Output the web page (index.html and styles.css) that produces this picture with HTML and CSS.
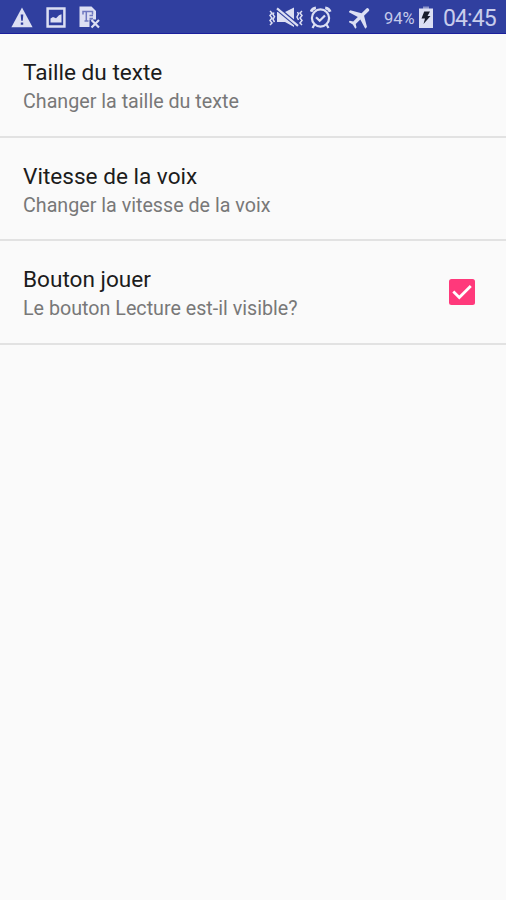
FILE: index.html
```html
<!DOCTYPE html>
<html lang="fr">
<head>
<meta charset="utf-8">
<title>Paramètres</title>
<link rel="stylesheet" href="styles.css">
</head>
<body>
<header class="status">
  <div class="notifications">
    <svg class="icon" width="22" height="22" viewBox="0 0 22 22"><path fill="currentColor" d="M11 .6 21.600 20.300H.4z"/><path fill="#303f9f" d="M9.700 7.500l.5 6.300h1.600l.5-6.300zM9.800 15.500v2.300h2.400v-2.300z"/></svg>
    <svg class="icon" width="20" height="22" viewBox="0 0 20 22"><path fill="none" stroke="currentColor" stroke-width="2.500" d="M1.600 1.400h16.800v18H1.600z"/><path fill="currentColor" d="M4.500 15.500V11.500l2.500-1.500 3 1.200 3-3 2.500-1v8.300z"/></svg>
    <svg class="icon" width="22" height="23" viewBox="0 0 22 23"><path fill="currentColor" d="M.5.5h12L17 5v9l-5 7H.5z"/><path fill="#303f9f" d="M10.500 13.500H22V23H10.500z"/><path fill="none" stroke="#6f79c0" stroke-width="1.500" d="M4 8.500V5.600h9.500v2.900M7.300 6v9M5.500 15h4M10.500 9.500H14M10.500 12.500H14"/><path stroke="currentColor" stroke-width="2.200" d="m12.500 14 7.500 7.500m0-7.500-7.500 7.500"/></svg>
  </div>
  <div class="system">
    <svg class="icon mute" width="34" height="22" viewBox="0 0 34 22"><path fill="currentColor" d="M8 5h8L25 .5v19.500l-9-5H8z"/><path stroke="#303f9f" stroke-width="4.600" d="m7 .5 23 19"/><path stroke="currentColor" stroke-width="2.200" d="m8 1.300 21 17.500"/><path fill="none" stroke="currentColor" stroke-width="1.500" d="m1 4 2 2-2 2.500L3 11l-2 2.500L3 16l-2 2M5 5.500 4 7.500l1.500 2-1.500 3L5.500 15M33 4l-2 2 2 2.500-2 2.500 2 2.500-2 2.500 2 2M28.500 5l1 2-1.500 3 1.500 3"/></svg>
    <svg class="icon alarm" width="22" height="24" viewBox="0 0 22 24"><g fill="none" stroke="currentColor"><circle cx="10.500" cy="12" r="8.600" stroke-width="2.200"/><path stroke-width="2.200" d="m6 11.200 3.700 3.600L15 9.500M4.500 18.500l-2 3.500M16.500 18.500l2 3.500"/><path stroke-width="2.800" d="M1 5.700Q2.200 2.200 5.900 1.800M20.200 5.700Q19 2.200 15.200 1.800"/></g></svg>
    <svg class="icon plane" width="22" height="22" viewBox="0 0 22 22"><path fill="currentColor" transform="translate(11.300 10) rotate(45) scale(1.180) translate(-12 -12)" d="M22 16v-2l-8.500-5V3.500a1.500 1.500 0 0 0-3 0V9L2 14v2l8.500-2.500V19L8 20.500V22l4-1 4 1v-1.500L13.500 19v-5.500z"/></svg>
    <span class="percent">94%</span>
    <svg class="icon battery" width="14" height="23" viewBox="0 0 14 23"><path fill="#8d95ca" d="M4 .5h6v3H4z"/><path fill="currentColor" d="M0 2.500h14V22H0z"/><path fill="#171b2b" d="M5.200 5.500H11L8.500 10H11.500L4.500 18 6 12.500H2.500z"/></svg>
    <time class="clock">04:45</time>
  </div>
</header>
<main>
  <section class="row">
    <div>
      <h2 class="title">Taille du texte</h2>
      <p class="summary">Changer la taille du texte</p>
    </div>
  </section>
  <section class="row">
    <div>
      <h2 class="title">Vitesse de la voix</h2>
      <p class="summary">Changer la vitesse de la voix</p>
    </div>
  </section>
  <section class="row">
    <div>
      <h2 class="title">Bouton jouer</h2>
      <p class="summary">Le bouton Lecture est-il visible?</p>
    </div>
    <svg class="check" width="26" height="26" viewBox="0 0 26 26"><rect width="26" height="26" rx="2.500" fill="#ff397b"/><path fill="none" stroke="#fff" stroke-width="2.800" d="m4.300 12.500 6 6L21.800 7"/></svg>
  </section>
</main>
</body>
</html>
```
FILE: styles.css
```css
body {
  margin: 0;
  min-height: 900px;
  background: #fafafa;
  font-family: Roboto, sans-serif;
}

.status {
  box-sizing: border-box;
  height: 34px;
  padding: 0 9px 0 11px;
  display: flex;
  justify-content: space-between;
  background: #303f9f;
  border-bottom: 1px solid #1b1f9c;
  color: #dcdff3;
}

.notifications,
.system {
  display: flex;
  align-items: center;
  padding-top: 2px;
}

.notifications {
  gap: 13px;
}

.icon {
  display: block;
  flex: none;
}

.mute {
  margin-right: 7px;
}

.alarm {
  margin-right: 17px;
}

.plane {
  margin-right: 13px;
}

.percent {
  width: 35px;
  font-size: 16.5px;
  padding-top: 1px;
  color: #c5caea;
}

.clock {
  margin-left: 10px;
  width: 54px;
  font-size: 23px;
  line-height: 27px;
  letter-spacing: -0.9px;
  padding-top: 2px;
  color: #c8cdec;
}

.row {
  box-sizing: border-box;
  height: 103.5px;
  padding: 25.4px 31px 0 23px;
  display: flex;
  justify-content: space-between;
  border-bottom: 2px solid #e2e2e2;
}

.title,
.summary {
  margin: 0;
  font-weight: 400;
  white-space: nowrap;
}

.title {
  font-size: 22.6px;
  line-height: 28px;
  color: #1c1c1c;
}

.summary {
  font-size: 19.7px;
  line-height: 29px;
  color: #787878;
}

.check {
  flex: none;
  margin-top: 12.5px;
}
```
